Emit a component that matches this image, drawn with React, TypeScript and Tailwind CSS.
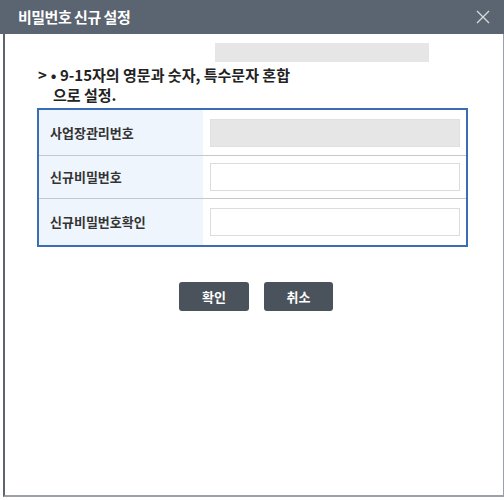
import React from "react";

const font = { fontFamily: '"Noto Sans CJK KR", "Noto Sans", sans-serif' };

function Row({ label, gray, last, h }: { label: string; gray?: boolean; last?: boolean; h: string }) {
  return (
    <div className={`flex ${h} ${last ? "" : "border-b border-[#c8c8c8]"}`}>
      <div className="w-[164px] bg-[#eef5fd] flex items-center pl-[11px] text-[13px] font-bold text-[#333]">
        {label}
      </div>
      <div className="flex-1 flex items-center pl-[7px] pr-[6px]">
        <div
          className={`h-[28px] w-full border ${gray ? "bg-[#e6e6e6] border-[#e0e0e0]" : "bg-white border-[#dcdcdc]"}`}
        />
      </div>
    </div>
  );
}

export default function App() {
  return (
    <div className="w-[504px] h-[500px] bg-white flex flex-col" style={font}>
      <div className="h-[34px] bg-[#5b6471] flex items-center justify-between pl-[18px] pr-[12px] shrink-0">
        <span className="text-white font-bold text-[15px] tracking-[-0.5px]">비밀번호 신규 설정</span>
        <svg width="14" height="14" viewBox="0 0 14 14" className="mr-[2px]">
          <path d="M1 1 L13 13 M13 1 L1 13" stroke="#d5d9de" strokeWidth="1.4" />
        </svg>
      </div>
      <div className="flex-1 flex pl-[3px] pb-[3px]">
        <div className="flex-1 flex flex-col border-l-[2px] border-[#5b6471] border-r border-r-[#9aa0a8] border-b-[2px] border-b-[#9aa0a8]">
          <div className="pl-[210px] pt-[9px]">
            <div className="w-[214px] h-[19px] bg-[#e6e6e6]" />
          </div>
          <div className="pl-[33px] pt-[3px] text-[15px] font-bold text-[#222] leading-[20px]">
            <div>
              <span className="mr-[4px]">&gt;</span>• 9-15자의 영문과 숫자, 특수문자 혼합
            </div>
            <div className="pl-[15px]">으로 설정.</div>
          </div>
          <div className="ml-[32px] mt-[3px] w-[431px] border-2 border-[#3a6db5]">
            <Row label="사업장관리번호" gray h="h-[46px]" />
            <Row label="신규비밀번호" h="h-[43px]" />
            <Row label="신규비밀번호확인" last h="h-[46px]" />
          </div>
          <div className="flex justify-center gap-[15px] mt-[35px] pl-[4px]">
            <button className="w-[70px] h-[29px] bg-[#4a525c] rounded-[3px] text-white text-[13px] font-bold">
              확인
            </button>
            <button className="w-[69px] h-[29px] bg-[#4a525c] rounded-[3px] text-white text-[13px] font-bold">
              취소
            </button>
          </div>
        </div>
      </div>
    </div>
  );
}
